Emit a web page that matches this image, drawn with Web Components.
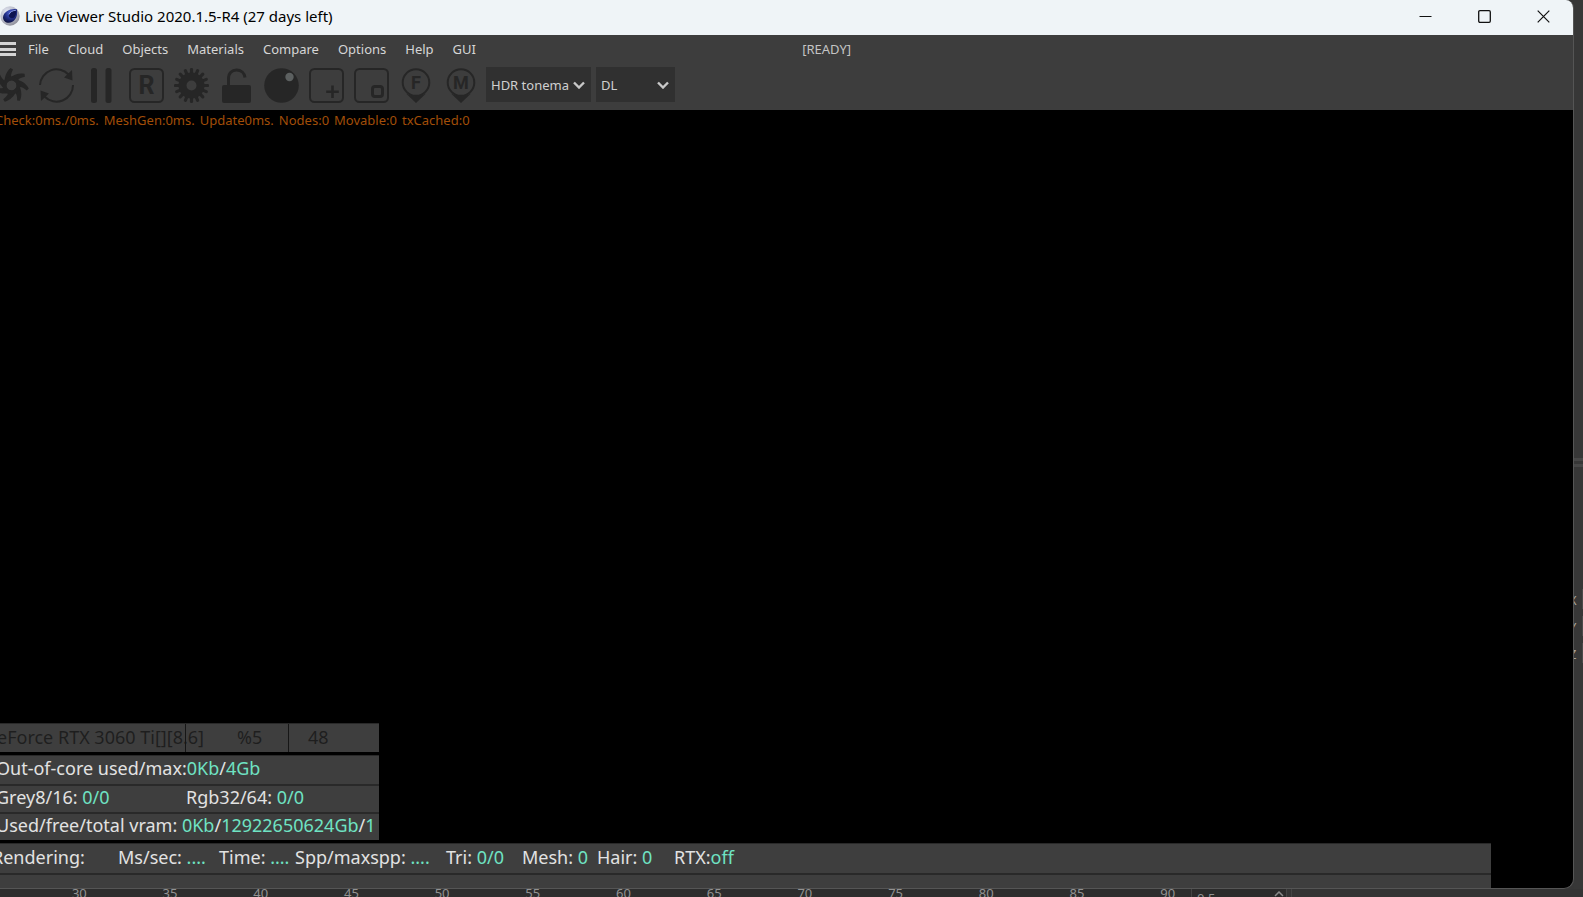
<!DOCTYPE html>
<html lang="en">
<head>
<meta charset="utf-8">
<title>Live Viewer Studio</title>
<style>
  body { margin: 0; background: #383838; font-family: "Noto Sans", "Open Sans", sans-serif; }
</style>
</head>
<body>
<lv-desktop>
  <lv-window>
    <lv-titlebar slot="title" caption="Live Viewer Studio 2020.1.5-R4 (27 days left)"></lv-titlebar>
    <lv-menubar slot="menu" items="File,Cloud,Objects,Materials,Compare,Options,Help,GUI" state="[READY]"></lv-menubar>
    <lv-toolbar slot="tools">
      <lv-dropdown class="wide" label="Tonemap" value="HDR tonema"></lv-dropdown>
      <lv-dropdown label="Kernel" value="DL"></lv-dropdown>
    </lv-toolbar>
    <lv-viewport>
      <span slot="info">Check:0ms./0ms.</span>
      <span slot="info">MeshGen:0ms.</span>
      <span slot="info">Update0ms.</span>
      <span slot="info">Nodes:0</span>
      <span slot="info">Movable:0</span>
      <span slot="info">txCached:0</span>
    </lv-viewport>
    <lv-stats slot="stats"></lv-stats>
    <lv-renderbar slot="stats"></lv-renderbar>
  </lv-window>
  <lv-coords slot="side"></lv-coords>
  <lv-timeline slot="bottom"></lv-timeline>
</lv-desktop>

<script>
const define = (name, markup, setup) => {
  const template = document.createElement('template');
  template.innerHTML = markup;
  customElements.define(name, class extends HTMLElement {
    connectedCallback() {
      if (this.shadowRoot) return;
      this.attachShadow({ mode: 'open' }).append(template.content.cloneNode(true));
      if (setup) setup(this, this.shadowRoot);
    }
  });
};

define('lv-desktop', `
  <style>
    :host { display: grid; grid-template: minmax(0, 1fr) 8px / minmax(0, 1fr) 9px; height: 100vh; overflow: hidden; background: #363636; }
    .bottom { grid-column: 1 / -1; overflow: hidden; }
  </style>
  <slot></slot><slot name="side"></slot><div class="bottom"><slot name="bottom"></slot></div>`);

define('lv-window', `
  <style>
    :host { display: flex; flex-direction: column; min-height: 0; overflow: hidden; background: #000;
            border: solid #555; border-width: 0 1px 1px 0; border-radius: 0 8px 10px 0; }
  </style>
  <slot name="title"></slot><slot name="menu"></slot><slot name="tools"></slot><slot></slot><slot name="stats"></slot>`);

define('lv-titlebar', `
  <style>
    :host { display: flex; align-items: center; height: 35px; background: #eff4f7; color: #000; }
    .logo { width: 20px; height: 20px; margin-bottom: 3px; }
    h1 { flex: 1; margin: 0 0 4px 5px; font-size: 15px; font-weight: 400; line-height: 24px; white-space: nowrap; }
    button { width: 59px; height: 32px; padding: 0; border: 0; background: none; display: grid; place-items: center; }
    button svg { width: 13px; height: 13px; fill: none; stroke: #111; }
    .buttons { display: flex; align-self: start; }
  </style>
  <svg class="logo" viewBox="0 0 20 20" aria-hidden="true">
    <defs>
      <radialGradient id="shell" cx=".35" cy=".3" r=".8"><stop offset="0" stop-color="#e4e8f4"/><stop offset=".6" stop-color="#b4b6c4"/><stop offset="1" stop-color="#85868f"/></radialGradient>
      <radialGradient id="eye" cx=".55" cy=".3" r=".8"><stop offset="0" stop-color="#5468d8"/><stop offset=".5" stop-color="#202d86"/><stop offset="1" stop-color="#080c30"/></radialGradient>
    </defs>
    <circle cx="10" cy="10" r="9.7" fill="url(#shell)"/>
    <path d="M16.800 3.200C11 2 3.500 5.500 3 11.200c0 3.600 2.700 5.600 5.900 5.500 4.600-.3 7.200-3.900 8-7.500.4-2.400.4-4.400-.1-6z" fill="url(#eye)"/>
    <path d="M16.200 4.200C12 4.500 8.800 6.600 8.800 9.500c.2 2.600 3 3.400 5 2.300 2.200-1.600 2.700-5.300 2.400-7.600z" fill="#0c1350"/>
    <path d="M16 4.200C13 4.400 9.700 6 9 8.500" fill="none" stroke="#93a4f0" stroke-width=".9"/>
  </svg>
  <h1></h1>
  <div class="buttons">
    <button aria-label="Minimize"><svg viewBox="0 0 13 13"><path d="M.5 6.500h12"/></svg></button>
    <button aria-label="Maximize"><svg viewBox="0 0 13 13"><rect x=".7" y=".7" width="11.600" height="11.600" rx="1.200" stroke-width="1.300"/></svg></button>
    <button aria-label="Close"><svg viewBox="0 0 13 13"><path d="M.7.7l11.600 11.600M12.300.7L.7 12.300" stroke-width="1.200"/></svg></button>
  </div>`,
  (el, root) => { root.querySelector('h1').textContent = el.getAttribute('caption'); });

define('lv-menubar', `
  <style>
    :host { display: grid; grid-template-columns: 51% 1fr; align-items: center; height: 28px; background: #3d3d3d; color: #d6d6d6; font-size: 13px; line-height: 18px; }
    nav { display: flex; align-items: center; gap: 19px; }
    button { padding: 0; border: 0; background: none; color: inherit; font: inherit; white-space: nowrap; }
    .burger { width: 16px; height: 14px; margin-right: -7px; display: grid; align-content: space-between; }
    .burger i { height: 3px; background: #d4d4d4; }
    output { color: #c4c4c4; }
  </style>
  <nav><button class="burger" aria-label="Panel menu"><i></i><i></i><i></i></button></nav>
  <output></output>`,
  (el, root) => {
    for (const item of el.getAttribute('items').split(',')) {
      const button = document.createElement('button');
      button.textContent = item;
      root.querySelector('nav').append(button);
    }
    root.querySelector('output').textContent = el.getAttribute('state');
  });

const pin = letter => `<circle cx="17" cy="14.500" r="13.300" fill="none" stroke="#262626" stroke-width="2"/>
  <path d="M7 25.500Q17 31 27 25.500L17 35z"/>
  <text x="17" y="20.500" font-size="18">${letter}</text>`;
const frame = '<rect x="1" y="1" width="33" height="33" rx="4.500" fill="none" stroke="#262626" stroke-width="2"/>';
const spin = (count, step, shape) => Array.from({ length: count }, (_, i) =>
  `<g transform="rotate(${i * step} 17.500 17.500)">${shape}</g>`).join('');
const tools = [
  ['Send scene', spin(7, 360 / 7, '<path d="M10.500 15C10.500 9 12 4 16.500 0L19 1.500C17 5 16.300 8.500 17.800 12z"/>') +
    '<circle cx="17.500" cy="17.500" r="7" fill="none" stroke="#262626" stroke-width="4"/>'],
  ['Restart', '<path d="M1 17A16.500 16.500 0 0 1 29.500 6.500M34 17A16.500 16.500 0 0 1 5.500 28.500" fill="none" stroke="#262626" stroke-width="2"/><path d="M33 2L33.500 12.500 25 9.500zM2 33L1.500 22.500 10 25.500z"/>'],
  ['Pause', '<rect x="7" width="6" height="35" rx="2.500"/><rect x="21.500" width="6" height="35" rx="2.500"/>'],
  ['Reset', frame + '<text x="17.500" y="26" font-size="25">R</text>'],
  ['Settings', spin(16, 22.5, '<path d="M17.500 1.500V8" stroke="#262626" stroke-width="3.200" stroke-linecap="round"/>') +
    '<circle cx="17.500" cy="17.500" r="9" fill="none" stroke="#262626" stroke-width="8"/>'],
  ['Lock resolution', '<rect x="3" y="17" width="29" height="18" rx="2"/><path d="M9.500 18V11C9.500 5 13 2 17.500 2S25.500 5 26 9.500" fill="none" stroke="#262626" stroke-width="3"/>'],
  ['Clay mode', '<circle cx="17.500" cy="17.500" r="17.300"/><circle cx="25.500" cy="9" r="4.200" fill="#5c6060"/>'],
  ['Add region', frame + '<path d="M23.500 17.500v12.500M17.200 23.700h12.600" stroke="#262626" stroke-width="2.600"/>'],
  ['Film region', frame + '<rect x="18.500" y="18.500" width="10" height="10" rx="2.500" fill="none" stroke="#262626" stroke-width="3"/>'],
  ['Pick focus', pin('F')],
  ['Pick material', pin('M')],
];

define('lv-toolbar', `
  <style>
    :host { display: flex; align-items: center; gap: 5px; box-sizing: border-box; height: 47px; padding-bottom: 2px; background: #3d3d3d; }
    .tools { display: flex; gap: 10px; margin: 0 2px 0 -6px; }
    button { width: 35px; height: 35px; padding: 0; border: 0; background: none; }
    svg { display: block; width: 35px; height: 35px; fill: #262626; }
    text { font-family: Roboto, sans-serif; font-weight: 700; text-anchor: middle; }
  </style>
  <div class="tools"></div><slot></slot>`,
  (el, root) => {
    root.querySelector('.tools').innerHTML = tools.map(([name, art]) =>
      `<button aria-label="${name}"><svg viewBox="0 0 35 35">${art}</svg></button>`).join('');
  });

define('lv-dropdown', `
  <style>
    :host { display: grid; width: 79px; height: 35px; margin-bottom: 2px; background: #303030; color: #cfcfcf; }
    :host(.wide) { width: 105px; }
    select, svg { grid-area: 1 / 1; }
    select { appearance: none; width: 100%; padding: 0 18px 0 5px; border: 0; border-radius: 0; background: none; color: inherit; font: 13px "Noto Sans", sans-serif; }
    svg { place-self: center end; width: 12px; height: 8px; margin-right: 6px; fill: none; stroke: #c8c8c8; stroke-width: 2.400; pointer-events: none; }
  </style>
  <select></select><svg viewBox="0 0 12 8"><path d="M1 1.500l5 5 5-5"/></svg>`,
  (el, root) => {
    const select = root.querySelector('select');
    select.setAttribute('aria-label', el.getAttribute('label'));
    select.add(new Option(el.getAttribute('value')));
  });

define('lv-viewport', `
  <style>
    :host { display: block; flex: 1; min-height: 0; background: #000; }
    .info { display: flex; gap: 5px; margin-left: -5px; color: #a24e08; font-size: 13px; line-height: 20px; white-space: nowrap; }
  </style>
  <div class="info"><slot name="info"></slot></div>`);

const rowStyle = `
  .row { display: flex; align-items: center; box-sizing: border-box; height: 28px; padding-bottom: 4px;
         border-top: 2px solid #292929; background: #3e3e3e; color: #e2e2e2; font-size: 18px; line-height: 22px; white-space: nowrap; overflow: hidden; }
  b { font-weight: 400; color: #6fe3c3; }`;

define('lv-stats', `
  <style>${rowStyle}
    :host { display: block; width: 379px; margin-bottom: 3px; }
    .gpu { display: grid; grid-template-columns: 185px 103px 1fr; height: 29px; margin-bottom: 3px; padding: 0; border-top-width: 1px; color: #1e1e1e; }
    .gpu span { height: 28px; box-sizing: border-box; padding-left: 19px; border-left: 1px solid #161616; line-height: 27px; }
    .gpu .load { padding-left: 51px; }
    .gpu .name { margin-left: -3px; padding: 0; border: 0; }
    .first { height: 29px; border-top-width: 1px; }
    .text { margin-left: -4px; }
    .pair { display: grid; grid-template-columns: 190px 1fr; }
  </style>
  <div class="row gpu"><span class="name">eForce RTX 3060 Ti[][8.6]</span><span class="load">%5</span><span>48</span></div>
  <div class="row first"><div class="text">Out-of-core used/max:<b>0Kb</b>/<b>4Gb</b></div></div>
  <div class="row"><div class="text pair"><span>Grey8/16: <b>0/0</b></span><span>Rgb32/64: <b>0/0</b></span></div></div>
  <div class="row"><div class="text">Used/free/total vram: <b>0Kb</b>/<b>12922650624Gb</b>/<b>1</b></div></div>`);

define('lv-renderbar', `
  <style>${rowStyle}
    :host { display: block; margin-right: 82px; }
    .row { height: 30px; border-top-width: 1px; }
    .fields { display: grid; grid-template-columns: 126px 101px 76px 151px 76px 75px 77px 1fr; margin-left: -8px; }
    .row.empty { height: 15px; border-top-width: 2px; }
  </style>
  <div class="row"><div class="fields">
    <span>Rendering:</span>
    <span>Ms/sec: <b>....</b></span>
    <span>Time: <b>....</b></span>
    <span>Spp/maxspp: <b>....</b></span>
    <span>Tri: <b>0/0</b></span>
    <span>Mesh: <b>0</b></span>
    <span>Hair: <b>0</b></span>
    <span>RTX:<b>off</b></span>
  </div></div>
  <div class="row empty"></div>`);

define('lv-coords', `
  <style>
    :host { display: block; overflow: hidden; background: #373737; color: #a8a49c; font-size: 13px; line-height: 27px; }
    hr { height: 3px; margin: 0 0 3px; border: 0; background: #474747; }
    .split { padding: 458px 0 117px; }
    .axis { display: flex; justify-content: space-between; margin-left: -5px; }
    .axis i { width: 1px; height: 20px; margin-top: 2px; background: #4a4a4a; }
  </style>
  <div class="split"><hr><hr></div>
  <div class="axis">X<i></i></div><div class="axis">Y<i></i></div><div class="axis">Z<i></i></div>`);

define('lv-timeline', `
  <style>
    :host { display: flex; height: 18px; color: #929292; font-size: 13px; line-height: 8px; background: #343434; }
    .ruler { display: grid; grid-template-columns: repeat(13, 1fr); flex: 0 0 1213px; box-sizing: border-box; padding-left: 34px; margin-right: -22px; background: #2d2d2d; }
    .ruler span { text-align: center; }
    .step { display: flex; align-items: start; width: 94px; border: solid #444; border-width: 0 1px; background: #2b2b2b; }
    input { width: 60px; height: 18px; padding: 0; margin: 0 0 0 5px; border: 0; background: none; color: inherit; font: 13px/18px "Noto Sans", sans-serif; }
    svg { width: 10px; height: 6px; margin: 2px 2px 0 auto; fill: none; stroke: #8a8a8a; stroke-width: 1.500; }
    .edge { width: 1px; margin-left: 4px; background: #444; }
  </style>
  <div class="ruler"></div>
  <div class="step"><input aria-label="Step" value="0.5"><svg viewBox="0 0 10 6"><path d="M1 5l4-4 4 4"/></svg></div><div class="edge"></div>`,
  (el, root) => {
    for (let frameNo = 30; frameNo <= 90; frameNo += 5) {
      const mark = document.createElement('span');
      mark.textContent = frameNo;
      root.querySelector('.ruler').append(mark);
    }
  });
</script>
</body>
</html>
